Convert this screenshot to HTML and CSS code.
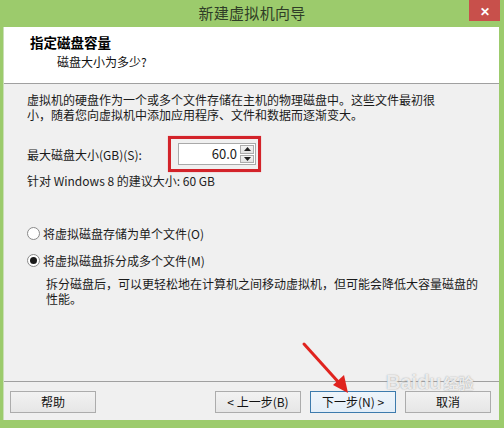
FILE: index.html
```html
<!DOCTYPE html>
<html lang="zh-CN">
<head>
<meta charset="utf-8">
<title>新建虚拟机向导</title>
<link rel="stylesheet" href="styles.css">
</head>
<body>
<div class="window">
  <div class="titlebar">
    <span></span>
    <span class="title">新建虚拟机向导</span>
    <span class="close">✕</span>
  </div>
  <div class="client">
    <div class="header">
      <div class="h-title">指定磁盘容量</div>
      <div class="h-sub">磁盘大小为多少?</div>
    </div>
    <div class="content">
      <p class="para">虚拟机的硬盘作为一个或多个文件存储在主机的物理磁盘中。这些文件最初很<br>小，随着您向虚拟机中添加应用程序、文件和数据而逐渐变大。</p>
      <div class="size-row">
        <span class="label">最大磁盘大小(GB)(S):</span>
        <div class="highlight">
          <div class="spin">
            <span class="spin-value">60.0</span>
            <div class="spin-btns">
              <span class="spin-btn"><svg width="7" height="4" viewBox="0 0 7 4"><path d="M0 4 L3.5 0 L7 4Z" fill="#222"/></svg></span>
              <span class="spin-btn"><svg width="7" height="4" viewBox="0 0 7 4"><path d="M0 0 L3.5 4 L7 0Z" fill="#222"/></svg></span>
            </div>
          </div>
        </div>
      </div>
      <p class="recommend">针对 Windows 8 的建议大小: 60 GB</p>
      <div class="radios">
        <div class="radio-row"><span class="radio"></span><span>将虚拟磁盘存储为单个文件(O)</span></div>
        <div class="radio-row"><span class="radio checked"></span><span>将虚拟磁盘拆分成多个文件(M)</span></div>
        <p class="desc">拆分磁盘后，可以更轻松地在计算机之间移动虚拟机，但可能会降低大容量磁盘的<br>性能。</p>
      </div>
    </div>
    <div class="footer">
      <button class="btn">帮助</button>
      <span class="spacer"></span>
      <button class="btn">&lt; 上一步(B)</button>
      <button class="btn default">下一步(N) &gt;</button>
      <button class="btn">取消</button>
    </div>
  </div>
  <svg class="arrow" width="60" height="60" viewBox="0 0 60 60">
    <line x1="3" y1="3" x2="40" y2="44" stroke="#e0231e" stroke-width="3" stroke-linecap="round"/>
    <path d="M47 52 L32 44 L43 34 Z" fill="#e0231e"/>
  </svg>
  <div class="watermark"><span class="wm-bai">Bai</span><span class="wm-paw">du</span><span class="wm-jy">经验</span></div>
</div>
</body>
</html>
```

FILE: styles.css
```css
* { box-sizing: border-box; }
html, body { margin: 0; padding: 0; }
body {
  width: 504px;
  height: 428px;
  overflow: hidden;
  font-family: "Noto Sans CJK SC", "Noto Sans", sans-serif;
  font-size: 12px;
  color: #1a1a1a;
  background: #9ccb6c;
}
.window {
  position: relative;
  width: 504px;
  height: 428px;
  display: flex;
  flex-direction: column;
  background: #9ccb6c;
}
.titlebar {
  height: 27px;
  display: grid;
  grid-template-columns: 1fr auto 1fr;
  align-items: start;
}
.title {
  font-size: 15px;
  line-height: 26px;
  color: #2f3d27;
  letter-spacing: 0.3px;
}
.close {
  justify-self: end;
  width: 31px;
  height: 21px;
  margin-right: 4px;
  background: #c8504b;
  color: #fff;
  font-size: 12px;
  line-height: 21px;
  text-align: center;
  font-weight: bold;
}
.client {
  flex: 1;
  margin: 0 5px 8px 3px;
  display: flex;
  flex-direction: column;
  background: #f0f0f0;
  border-left: 1px solid #c9dfb6;
}
.header {
  height: 57px;
  background: #fff;
  border-bottom: 1px solid #a0a0a0;
  padding: 6px 0 0 26px;
}
.h-title {
  font-size: 13.5px;
  font-weight: bold;
  line-height: 18px;
  color: #000;
}
.h-sub {
  margin: 2px 0 0 27px;
  line-height: 17px;
  color: #111;
}
.content {
  flex: 1;
  padding: 8px 0 0 23px;
}
.para {
  margin: 0;
  line-height: 15px;
}
.size-row {
  margin-top: 14px;
  display: flex;
  align-items: center;
}
.label {
  width: 141px;
}
.highlight {
  border: 3px solid #d3232a;
  padding: 4px 2px 4px 7px;
  box-shadow: 0 0 1px #e88;
}
.spin {
  width: 78px;
  height: 22px;
  display: flex;
  background: #fff;
  border: 1px solid #a9a9a9;
}
.spin-value {
  flex: 1;
  text-align: right;
  font-size: 13px;
  line-height: 20px;
  padding-right: 3px;
}
.spin-btns {
  width: 15px;
  display: flex;
  flex-direction: column;
  gap: 1px;
  padding: 1px 1px 1px 0;
}
.spin-btn {
  flex: 1;
  display: flex;
  align-items: center;
  justify-content: center;
  background: linear-gradient(#f4f4f4, #e2e2e2);
  border: 1px solid #acacac;
}
.recommend {
  margin: 0;
  line-height: 15px;
  padding-top: 1px;
  color: #222;
}
.radios {
  margin-top: 38px;
}
.radio-row {
  display: flex;
  align-items: center;
  gap: 3px;
  line-height: 15px;
  height: 15px;
  margin-bottom: 12px;
}
.radio {
  width: 13px;
  height: 13px;
  border-radius: 50%;
  border: 1px solid #8a8a8a;
  background: #fff;
  display: flex;
  align-items: center;
  justify-content: center;
}
.radio.checked::after {
  content: "";
  width: 7px;
  height: 7px;
  border-radius: 50%;
  background: #1a1a1a;
}
.desc {
  margin: -4px 0 0 19px;
  line-height: 15px;
}
.footer {
  height: 39px;
  border-top: 1px solid #a0a0a0;
  display: flex;
  align-items: flex-start;
  gap: 9px;
  padding: 9px 8px 0 6px;
}
.spacer { flex: 1; }
.btn {
  width: 86px;
  height: 22px;
  padding: 0;
  font-family: inherit;
  font-size: 12px;
  color: #111;
  background: linear-gradient(#f2f2f2, #e6e6e6);
  border: 1px solid #acacac;
  line-height: 20px;
}
.btn.default {
  border-color: #3d7bad;
  background: linear-gradient(#eef5fb, #e3eef8);
}
.arrow {
  position: absolute;
  left: 301px;
  top: 341px;
}
.watermark {
  position: absolute;
  left: 386px;
  top: 372px;
  display: flex;
  align-items: baseline;
  line-height: 20px;
  color: rgba(255, 255, 255, 0.8);
  font-family: "Liberation Sans", sans-serif;
  font-size: 20px;
  font-weight: bold;
  text-shadow: 0 0 1px rgba(120,120,120,0.6), 0 0 2px rgba(160,160,160,0.4);
  pointer-events: none;
}
.wm-jy {
  font-family: "Noto Sans CJK SC", sans-serif;
  font-size: 15px;
  margin-left: 2px;
}
```
